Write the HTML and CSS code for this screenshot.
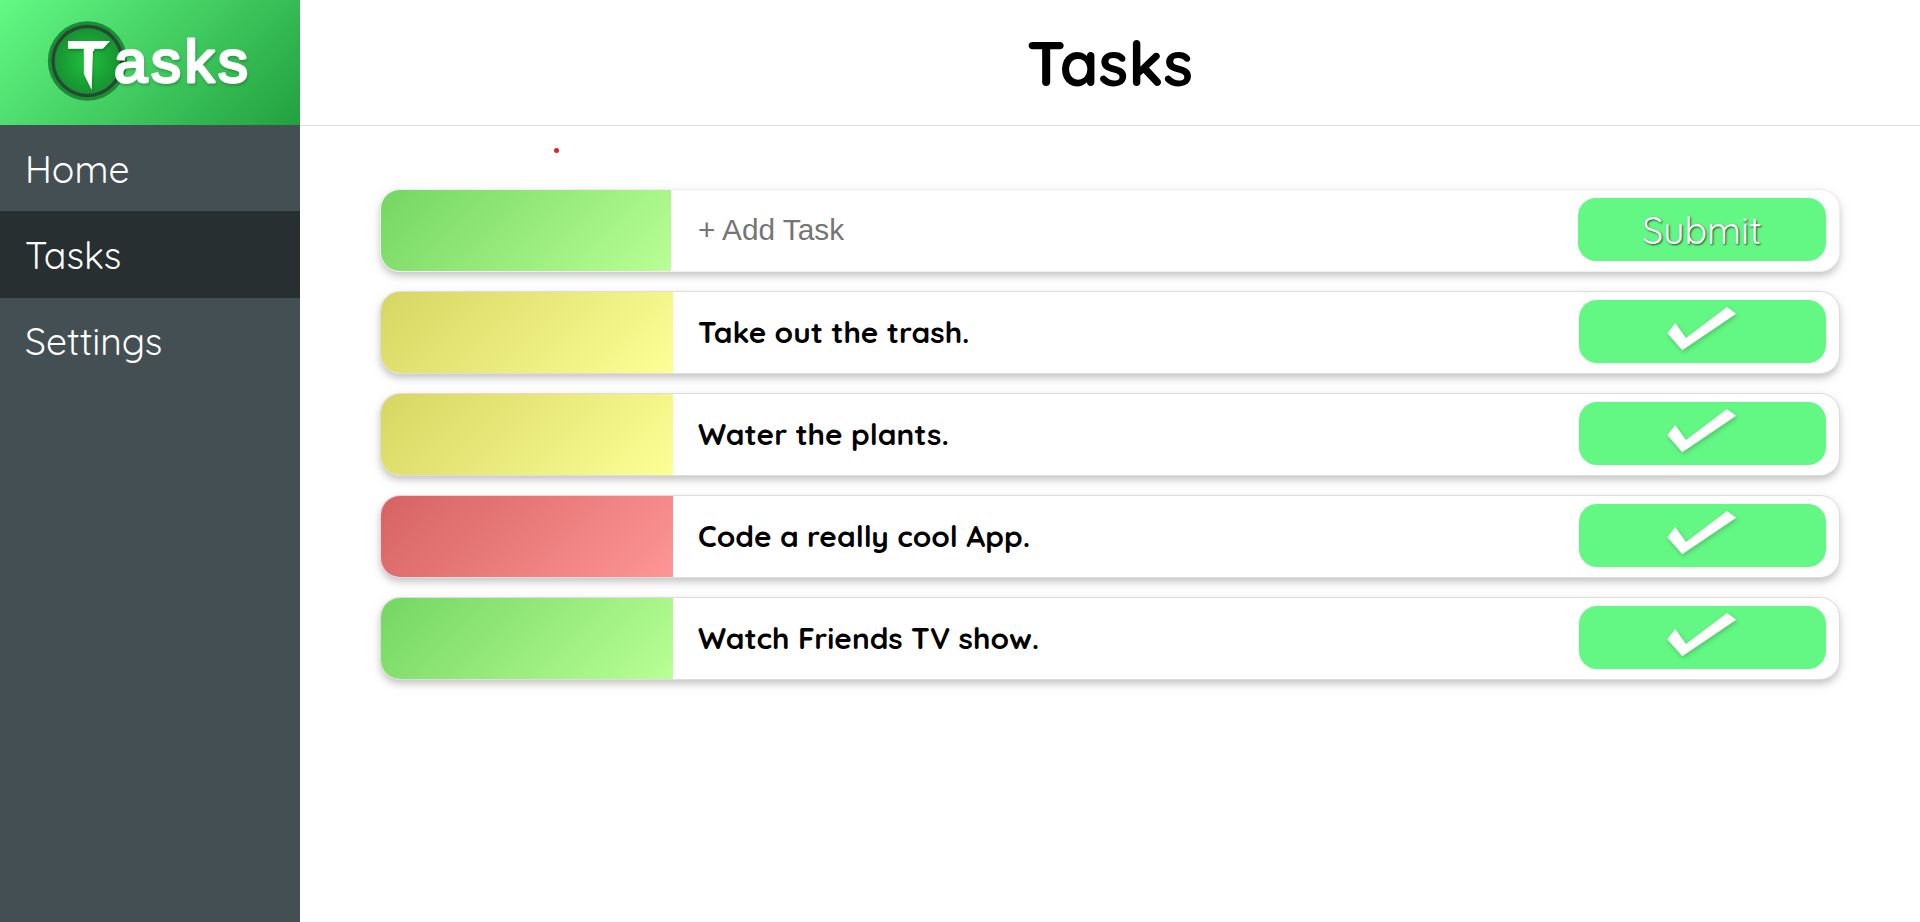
FILE: index.html
```html
<!DOCTYPE html>
<html lang="en">
<head>
<meta charset="utf-8">
<title>Tasks</title>
<link rel="stylesheet" href="styles.css">
</head>
<body>
<aside class="sidebar">
  <div class="brand">
    <svg class="logo" width="300" height="125" viewBox="0 0 300 125" role="img" aria-label="Tasks">
      <defs>
        <radialGradient id="disc"><stop offset="0" stop-color="#1fc23c"/><stop offset="1" stop-color="#169030"/></radialGradient>
        <clipPath id="blade"><path d="M68 41H110L101 51H93L91.7 90L83.3 73V52H68z"/></clipPath>
      </defs>
      <circle cx="87.5" cy="61" r="39.7" fill="#1b8d33"/>
      <circle cx="87.5" cy="61" r="34.5" fill="url(#disc)" stroke="#2b4536" stroke-width="3.4"/>
      <g class="logo-shadow"><text class="logo-t" x="67" y="90" textLength="44" lengthAdjust="spacingAndGlyphs" clip-path="url(#blade)">T</text></g>
      <text class="logo-rest logo-shadow" x="114" y="82" textLength="134" lengthAdjust="spacing">asks</text>
    </svg>
  </div>
  <nav class="nav">
    <a class="nav-item">Home</a>
    <a class="nav-item active">Tasks</a>
    <a class="nav-item">Settings</a>
  </nav>
</aside>
<div class="page">
  <header class="header"><h1 class="title">Tasks</h1></header>
  <main class="content">
    <div class="dot"></div>
    <div class="list">
      <form class="card entry">
        <div class="level green"></div>
        <input class="field" type="text" placeholder="+ Add Task">
        <button class="action" type="button"><span class="submit">Submit</span></button>
      </form>
      <div class="card">
        <div class="level yellow"></div>
        <div class="text">Take out the trash.</div>
        <button class="action" type="button"><svg class="check" width="247" height="63"><path d="M88.3 33.3L96.3 23L107 38L148 7L157.3 13.7L103.3 50.3z"/></svg></button>
      </div>
      <div class="card">
        <div class="level yellow"></div>
        <div class="text">Water the plants.</div>
        <button class="action" type="button"><svg class="check" width="247" height="63"><path d="M88.3 33.3L96.3 23L107 38L148 7L157.3 13.7L103.3 50.3z"/></svg></button>
      </div>
      <div class="card">
        <div class="level red"></div>
        <div class="text">Code a really cool App.</div>
        <button class="action" type="button"><svg class="check" width="247" height="63"><path d="M88.3 33.3L96.3 23L107 38L148 7L157.3 13.7L103.3 50.3z"/></svg></button>
      </div>
      <div class="card">
        <div class="level green"></div>
        <div class="text">Watch Friends TV show.</div>
        <button class="action" type="button"><svg class="check" width="247" height="63"><path d="M88.3 33.3L96.3 23L107 38L148 7L157.3 13.7L103.3 50.3z"/></svg></button>
      </div>
    </div>
  </main>
</div>
</body>
</html>
```
FILE: styles.css
```css
* { box-sizing: border-box; }
body {
  margin: 0;
  height: 922px;
  display: flex;
  overflow: hidden;
  background: #fff;
  font-family: Quicksand, Lato, sans-serif;
}
.sidebar { width: 300px; background: #444f53; }
.brand { height: 125px; background: linear-gradient(135deg, #63f984, #22a13f); }
.logo { display: block; }
.logo-t { font: bold 70px "Liberation Sans", Arial, sans-serif; fill: #fff; }
.logo-rest {
  font: 60px "Liberation Sans", Arial, sans-serif;
  fill: #fff;
  stroke: #fff;
  stroke-width: 2.8px;
  stroke-linejoin: round;
}
.logo-shadow { filter: drop-shadow(1px 2px 1px rgba(0, 0, 0, .2)); }
.nav-item {
  display: flex;
  align-items: center;
  height: 86.4px;
  padding: 1px 0 0 25px;
  color: #fff;
  font-size: 37.3px;
  font-weight: 400;
}
.active { background: #282f30; }
.page { flex: 1; }
.header {
  height: 126px;
  border-bottom: 1px solid #ddd;
  display: flex;
  align-items: center;
  justify-content: center;
}
.title { margin: 0; font-size: 62px; font-weight: 700; line-height: 72px; }
.content { padding: 22px 80px 0; }
.dot { width: 5px; height: 5px; margin: 0 0 36px 173.5px; border-radius: 50%; background: #d8232a; }
.list { display: flex; flex-direction: column; gap: 19px; }
.card {
  display: flex;
  height: 83px;
  border: 1px solid #ddd;
  border-radius: 20px;
  background: #fff;
  box-shadow: 0 4px 7px rgba(0, 0, 0, .2), 0 3px 20px rgba(0, 0, 0, .04);
}
.entry { border-color: #eee; }
.level { width: 292px; border-radius: 19px 0 0 19px; }
.entry .level { width: 290px; }
.green { background: linear-gradient(135deg, #74d663, #b9ff95); }
.yellow { background: linear-gradient(135deg, #d6d663, #fdff95); }
.red { background: linear-gradient(135deg, #d66363, #ff9595); }
.text, .field { flex: 1; min-width: 0; }
.text {
  display: flex;
  align-items: center;
  padding: 0 0 2px 25px;
  font-size: 29.8px;
  font-weight: 700;
  color: #000;
}
.field {
  border: 0;
  padding: 0 0 2px 27px;
  background: transparent;
  font: 29.8px "Liberation Sans", Arial, sans-serif;
}
.field::placeholder { color: #757575; }
.action {
  width: 247px;
  height: 63px;
  margin: 8px 13px 0 0;
  padding: 0;
  border: 0;
  border-radius: 18px;
  background: #63f784;
  color: #fff;
}
.entry .action { width: 248px; }
.submit {
  font: 400 37.3px Quicksand, Lato, sans-serif;
  text-shadow: 1px 1px 2px rgba(0, 0, 0, .7);
}
.check { display: block; fill: #fff; filter: drop-shadow(1px 2px 2px rgba(0, 0, 0, .2)); }
```
